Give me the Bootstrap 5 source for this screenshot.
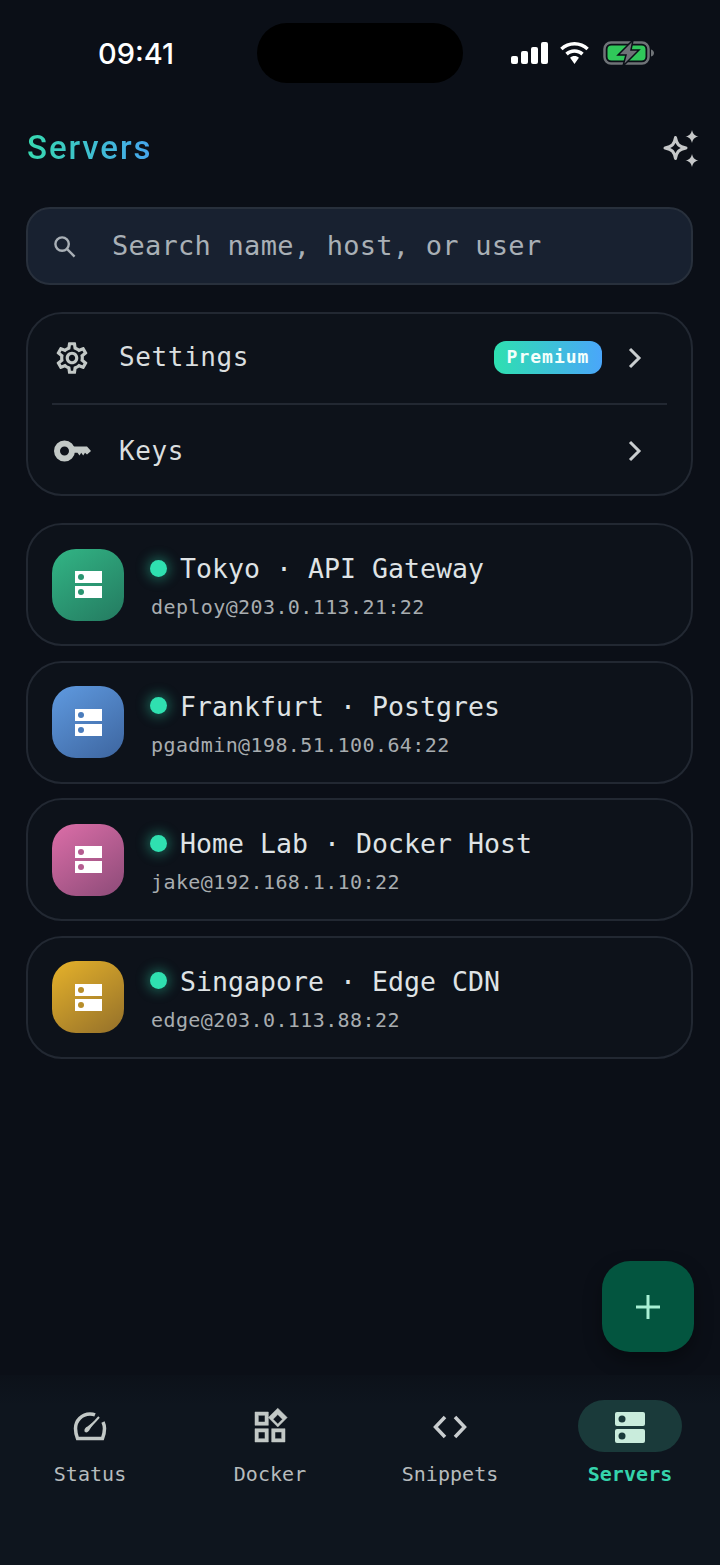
<!DOCTYPE html>
<html lang="en">
<head>
  <meta charset="UTF-8" />
  <meta name="viewport" content="width=device-width, initial-scale=1" />
  <title>Servers</title>
  <link href="https://cdn.jsdelivr.net/npm/bootstrap@5.3.3/dist/css/bootstrap.min.css" rel="stylesheet">
  <style>
    body {
      width: 720px;
      height: 1565px;
      overflow: hidden;
      background-color: #0b0f17;
      font-family: "DejaVu Sans Mono", monospace;
    }

    .app-screen { height: 1565px; position: relative; }

    /* status bar */
    .status-bar { height: 106px; padding: 23px 66px 0 98px; }
    .status-time { font-family: Inter, sans-serif; font-size: 29px; font-weight: 500; color: #fff; line-height: 61px; width: 159px; }
    .status-island { width: 206px; height: 60px; background: #000; border-radius: 30px; }
    .status-icons { margin-left: 48px; height: 60px; gap: 11px; }
    .status-battery { margin-left: 2px; }

    /* header */
    .page-head { height: 84px; padding: 0 21px 0 27px; }
    .page-title {
      font-family: Roboto, sans-serif;
      font-size: 33px;
      letter-spacing: 1.9px;
      line-height: 84px;
      margin: 0;
      font-weight: 500;
      background: linear-gradient(90deg, #37d9b0, #46a6ee);
      -webkit-background-clip: text;
      background-clip: text;
      color: transparent;
      width: 124px;
      white-space: nowrap;
    }

    .page-body { padding: 17px 27px 0 26px; }

    /* search */
    .search-box {
      height: 78px;
      background: #182130;
      border: 2px solid #28303c;
      border-radius: 24px;
      padding: 0 25px;
      gap: 36px;
      margin-bottom: 27px;
      font-size: 27px;
      letter-spacing: .26px;
      color: #a9b0b6;
    }
    .search-box svg { flex: none; }

    /* panels */
    .soft-panel {
      background: #0d121a;
      border: 2px solid #222832;
      border-radius: 36px;
    }
    .menu-panel { height: 184px; margin-bottom: 27px; padding: 0 24px; }
    .menu-row { height: 91px; gap: 28px; font-size: 26px; letter-spacing: .6px; color: #dadedf; }
    .menu-row:first-child { height: 89px; padding-bottom: 2px; }
    .menu-row + .menu-row { border-top: 2px solid #222832; padding-top: 3px; }
    .menu-icon { width: 38px; flex: none; display: flex; justify-content: center; margin-left: 1px; }
    .menu-chev { margin-right: 25px; flex: none; }
    .premium-tag {
      width: 108px;
      height: 33px;
      border-radius: 12px;
      background: linear-gradient(90deg, #2ee0b0, #4aa6fa);
      color: #f3fffb;
      font-size: 18px;
      font-weight: 700;
      letter-spacing: 1px;
      line-height: 32px;
      text-align: center;
      margin-right: -2px;
    }

    /* servers */
    .server-list { gap: 14.5px; }
    .server-item { height: 123px; padding: 0 24px; gap: 26px; }
    .server-icon {
      width: 72px;
      height: 72px;
      border-radius: 24px;
      flex: none;
      display: flex;
      align-items: center;
      justify-content: center;
    }
    .tone-green { background: linear-gradient(145deg, #32b585, #247a60); --hole: #2a9470; }
    .tone-blue { background: linear-gradient(145deg, #5f9ae0, #3d659f); --hole: #4a7cbc; }
    .tone-pink { background: linear-gradient(145deg, #dc6ea8, #8c4b78); --hole: #b45c90; }
    .tone-gold { background: linear-gradient(145deg, #e6b22a, #94702a); --hole: #b88e2a; }
    .server-text { padding-top: 2px; }
    .server-name { font-size: 26.5px; color: #dfe3e5; letter-spacing: .05px; line-height: 36px; gap: 13px; white-space: nowrap; }
    .live-dot { width: 17px; height: 17px; border-radius: 50%; background: #2fe0b0; box-shadow: 0 0 12px 3px rgba(47, 224, 176, .35); flex: none; position: relative; top: -1px; }
    .server-addr { font-size: 20px; color: #a8adb0; letter-spacing: .4px; line-height: 26px; margin: 7px 0 0 1px; white-space: nowrap; }

    /* fab */
    .add-fab {
      position: absolute;
      left: 602px;
      top: 1261px;
      width: 92px;
      height: 91px;
      border-radius: 28px;
      background: #03553f;
      border: 0;
      box-shadow: 0 8px 18px rgba(0, 0, 0, .35);
    }

    /* bottom nav */
    .bottom-tabs {
      position: absolute;
      left: 0;
      right: 0;
      bottom: 0;
      height: 190px;
      background: linear-gradient(180deg, #0c1119 0, #0e151e 30px);
      padding-top: 25px;
    }
    .tab-item { width: 180px; text-align: center; font-size: 20px; letter-spacing: .05px; color: #b6bbbd; }
    .tab-glyph { height: 52px; width: 104px; margin: 0 auto 7px; display: flex; align-items: center; justify-content: center; border-radius: 26px; }
    .tab-glyph svg { position: relative; top: 1px; }
    .tab-item.is-active { color: #35d3ac; font-weight: 700; }
    .tab-item.is-active .tab-glyph { background: #1a3a3a; }
  </style>
</head>
<body>
<div class="app-screen d-flex flex-column">

  <!-- Status bar -->
  <div class="status-bar d-flex align-items-start">
    <div class="status-time">09:41</div>
    <div class="status-island"></div>
    <div class="status-icons d-flex align-items-center">
      <svg width="37" height="22" viewBox="0 0 37 22"><g fill="#fff"><rect x="0" y="14" width="7" height="8" rx="2"/><rect x="10" y="9" width="7" height="13" rx="2"/><rect x="20" y="5" width="7" height="17" rx="2"/><rect x="30" y="0" width="7" height="22" rx="2"/></g></svg>
      <svg width="31" height="22" viewBox="0 0 32 24"><path fill="#fff" d="M16 0c6 0 11.500 2.300 15.600 6.200l-2.600 2.900C25.600 5.800 21 3.900 16 3.900S6.400 5.800 3 9.100L.4 6.200C4.500 2.300 10 0 16 0zm0 7.800c3.900 0 7.400 1.500 10 3.900l-2.700 2.900c-1.900-1.800-4.500-2.900-7.300-2.900s-5.400 1.100-7.300 2.900L6 11.700c2.600-2.400 6.100-3.900 10-3.900zm0 7.500c1.900 0 3.600.7 4.800 1.900L16 24l-4.800-6.800c1.200-1.200 2.900-1.900 4.800-1.900z"/></svg>
      <svg class="status-battery" width="51" height="26" viewBox="0 0 51 26">
        <rect x="1.500" y="2.500" width="44" height="21" rx="6.500" fill="none" stroke="#6f7377" stroke-width="2.500"/>
        <rect x="4.500" y="5.500" width="38" height="15" rx="4" fill="#30c85a"/>
        <path d="M48 9.500c2 .5 3 2 3 3.500s-1 3-3 3.500z" fill="#6f7377"/>
        <path d="M30 0 15 15h8l-3 11 16-16h-8z" fill="#6f7377" stroke="#0b0f17" stroke-width="1.500"/>
      </svg>
    </div>
  </div>

  <!-- Header -->
  <div class="page-head d-flex align-items-center justify-content-between">
    <h1 class="page-title">Servers</h1>
    <svg width="37" height="37" viewBox="0 0 37 37">
      <path d="M13.500 7.500c1.400 7.200 3.300 9.100 10.500 10.500-7.200 1.400-9.100 3.300-10.500 10.500C12.100 21.300 10.200 19.400 3 18c7.200-1.400 9.100-3.300 10.500-10.500z" fill="none" stroke="#c6c8c9" stroke-width="3" stroke-linejoin="round"/>
      <path d="M30 0c.8 3.900 2.600 5.700 6.500 6.500-3.900.8-5.700 2.600-6.500 6.500-.8-3.900-2.600-5.700-6.500-6.500C27.400 5.700 29.200 3.900 30 0zM30 24c.8 3.900 2.600 5.700 6.500 6.500-3.900.8-5.700 2.600-6.500 6.500-.8-3.900-2.600-5.700-6.500-6.500 3.900-.8 5.700-2.600 6.500-6.500z" fill="#c6c8c9"/>
    </svg>
  </div>

  <div class="page-body">
    <!-- Search -->
    <div class="search-box d-flex align-items-center">
      <svg width="23" height="23" viewBox="0 0 24 24" fill="none" stroke="#a9b0b6" stroke-width="2.500"><circle cx="9.500" cy="9.500" r="7"/><path d="m14.500 14.500 8 8"/></svg>
      <span>Search name, host, or user</span>
    </div>

    <!-- Menu -->
    <div class="soft-panel menu-panel">
      <div class="menu-row d-flex align-items-center">
        <span class="menu-icon">
          <svg width="40" height="40" viewBox="0 0 24 24" fill="#c2c8c6"><path d="M19.43 12.980c.04-.32.07-.64.07-.98 0-.34-.03-.66-.07-.98l2.110-1.650c.19-.15.24-.42.12-.64l-2-3.460c-.09-.16-.26-.25-.44-.25-.06 0-.12.01-.17.03l-2.490 1c-.52-.4-1.080-.73-1.690-.98l-.38-2.650C14.460 2.180 14.250 2 14 2h-4c-.25 0-.46.18-.49.42l-.38 2.650c-.61.25-1.170.59-1.690.98l-2.490-1c-.06-.02-.12-.03-.18-.03-.17 0-.34.09-.43.25l-2 3.460c-.13.22-.07.49.12.64l2.110 1.650c-.04.32-.07.65-.07.98 0 .33.03.66.07.98l-2.110 1.650c-.19.15-.24.42-.12.64l2 3.460c.09.16.26.25.44.25.06 0 .12-.01.17-.03l2.490-1c.52.4 1.080.73 1.690.98l.38 2.650c.03.24.24.42.49.42h4c.25 0 .46-.18.49-.42l.38-2.650c.61-.25 1.170-.59 1.690-.98l2.490 1c.06.02.12.03.18.03.17 0 .34-.09.43-.25l2-3.460c.12-.22.07-.49-.12-.64l-2.110-1.650zm-1.980-1.710c.04.31.05.52.05.73 0 .21-.02.43-.05.73l-.14 1.130.89.7 1.080.84-.7 1.210-1.270-.51-1.040-.42-.9.68c-.43.32-.84.56-1.250.73l-1.060.43-.16 1.130-.2 1.350h-1.400l-.19-1.350-.16-1.130-1.060-.43c-.43-.18-.83-.41-1.230-.71l-.91-.7-1.060.43-1.270.51-.7-1.210 1.080-.84.89-.7-.14-1.130c-.03-.31-.05-.54-.05-.74s.02-.43.05-.73l.14-1.130-.89-.7-1.080-.84.7-1.210 1.270.51 1.040.42.9-.68c.43-.32.84-.56 1.250-.73l1.060-.43.16-1.130.2-1.350h1.390l.19 1.350.16 1.130 1.060.43c.43.18.83.41 1.230.71l.91.7 1.060-.43 1.270-.51.7 1.210-1.070.85-.89.7.14 1.130zM12 8c-2.210 0-4 1.790-4 4s1.790 4 4 4 4-1.790 4-4-1.790-4-4-4zm0 6c-1.100 0-2-.9-2-2s.9-2 2-2 2 .9 2 2-.9 2-2 2z"/></svg>
        </span>
        <span class="flex-grow-1">Settings</span>
        <span class="premium-tag">Premium</span>
        <svg class="menu-chev" width="14" height="22" viewBox="0 0 14 22" fill="none" stroke="#c9cdcf" stroke-width="3"><path d="m2 2 9 9-9 9"/></svg>
      </div>
      <div class="menu-row d-flex align-items-center">
        <span class="menu-icon">
          <svg width="37" height="24" viewBox="0 0 37 24"><circle cx="10.500" cy="12" r="7.500" fill="none" stroke="#c2c8c6" stroke-width="6"/><path d="M18 7.500h15l4 4.500-4 3.500-2-1.800-1.800 2.800-2-2.800-1.700 2.800-2-2.800H18z" fill="#c2c8c6"/></svg>
        </span>
        <span class="flex-grow-1">Keys</span>
        <svg class="menu-chev" width="14" height="22" viewBox="0 0 14 22" fill="none" stroke="#c9cdcf" stroke-width="3"><path d="m2 2 9 9-9 9"/></svg>
      </div>
    </div>

    <!-- Server list -->
    <div class="server-list d-flex flex-column" id="serverList"></div>
  </div>

  <button class="add-fab d-flex align-items-center justify-content-center" type="button" aria-label="Add">
    <svg width="24" height="24" viewBox="0 0 24 24" stroke="#a8f0d4" stroke-width="3"><path d="M12 0v24M0 12h24"/></svg>
  </button>

  <!-- Bottom tabs -->
  <nav class="bottom-tabs d-flex">
    <div class="tab-item">
      <div class="tab-glyph"><svg width="34" height="32" viewBox="0 0 34 32" fill="none" stroke="#c2c8c6" stroke-width="3.500"><path d="M22 3.800C20.500 3.200 19 3 17 3 9 3 2.500 9.500 2.500 17.500c0 3.500.7 6.500 2 10h25c1.300-3.500 2-6.500 2-10 0-2.500-.6-4.500-1.500-6.500"/><path d="m26 6-10 11" stroke-width="2"/><path d="M11.500 20.500c-.5-2.500 1-4 3-5l7-5.500-4.500 8c-1 2-2.500 3.500-4 3.500z" fill="#c2c8c6" stroke="none"/></svg></div>
      Status
    </div>
    <div class="tab-item">
      <div class="tab-glyph"><svg width="40" height="40" viewBox="0 0 24 24" fill="#c2c8c6" stroke="#c2c8c6" stroke-width=".3"><path d="M16.660 4.520l2.830 2.830-2.830 2.830-2.830-2.830 2.830-2.830M9 5v4H5V5h4m10 10v4h-4v-4h4M9 15v4H5v-4h4m7.660-14.310L11 6.340 16.660 12l5.660-5.660-5.660-5.650zM11 3H3v8h8V3zm10 10h-8v8h8v-8zm-10 0H3v8h8v-8z"/></svg></div>
      Docker
    </div>
    <div class="tab-item">
      <div class="tab-glyph"><svg width="34" height="24" viewBox="0 0 34 24" fill="none" stroke="#c9cdcf" stroke-width="3.500"><path d="M12 2 2.500 12l9.500 10M22 2l9.500 10L22 22"/></svg></div>
      Snippets
    </div>
    <div class="tab-item is-active">
      <div class="tab-glyph"><svg width="30" height="31" viewBox="0 0 30 31"><rect width="30" height="14" rx="2" fill="#c9ecdc"/><rect y="17" width="30" height="14" rx="2" fill="#c9ecdc"/><circle cx="7" cy="7" r="3.500" fill="#1a3a3a"/><circle cx="7" cy="24" r="3.500" fill="#1a3a3a"/></svg></div>
      Servers
    </div>
  </nav>
</div>

<script>
  const servers = [
    { name: 'Tokyo · API Gateway', addr: 'deploy@203.0.113.21:22', tone: 'tone-green' },
    { name: 'Frankfurt · Postgres', addr: 'pgadmin@198.51.100.64:22', tone: 'tone-blue' },
    { name: 'Home Lab · Docker Host', addr: 'jake@192.168.1.10:22', tone: 'tone-pink' },
    { name: 'Singapore · Edge CDN', addr: 'edge@203.0.113.88:22', tone: 'tone-gold' }
  ];

  const list = document.getElementById('serverList');
  servers.forEach(s => {
    const row = document.createElement('div');
    row.className = 'soft-panel server-item d-flex align-items-center';
    row.innerHTML = `
      <div class="server-icon ${s.tone}">
        <svg width="27" height="27" viewBox="0 0 27 27">
          <rect width="27" height="12" fill="#fff"/><rect y="15" width="27" height="12" fill="#fff"/>
          <circle cx="6" cy="6" r="3" style="fill:var(--hole)"/><circle cx="6" cy="21" r="3" style="fill:var(--hole)"/>
        </svg>
      </div>
      <div class="server-text">
        <div class="server-name d-flex align-items-center"><span class="live-dot"></span><span>${s.name}</span></div>
        <div class="server-addr">${s.addr}</div>
      </div>`;
    list.appendChild(row);
  });
</script>
<script src="https://cdn.jsdelivr.net/npm/bootstrap@5.3.3/dist/js/bootstrap.bundle.min.js"></script>
</body>
</html>
